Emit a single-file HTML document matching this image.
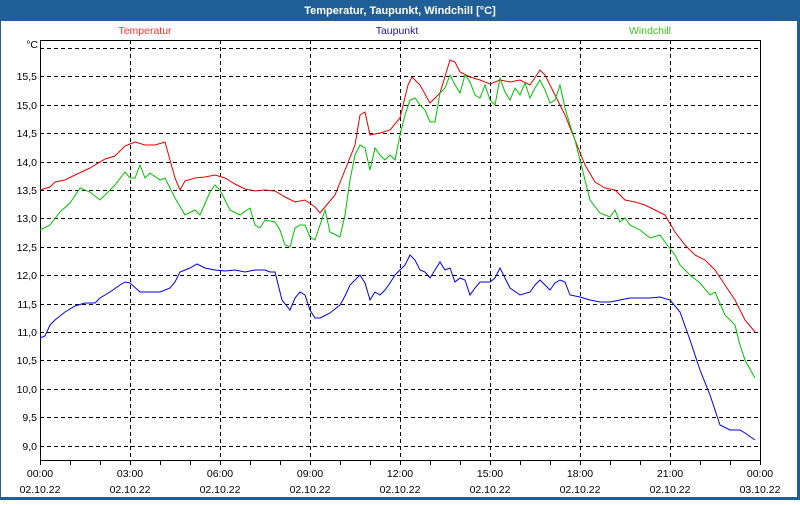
<!DOCTYPE html>
<html><head><meta charset="utf-8"><style>
body{margin:0;width:800px;height:500px;overflow:hidden;background:#fff;font-family:"Liberation Sans",sans-serif}
</style></head><body>
<svg width="800" height="500" xmlns="http://www.w3.org/2000/svg" font-family="Liberation Sans, sans-serif" font-size="10.5">
<rect x="0" y="0" width="800" height="500" fill="#1f5f96"/>
<rect x="1" y="21" width="796" height="476" fill="#fff"/>
<text x="400" y="14" fill="#fff" font-weight="bold" font-size="11" text-anchor="middle">Temperatur, Taupunkt, Windchill [°C]</text>
<text x="145" y="34" fill="#f03030" text-anchor="middle">Temperatur</text>
<text x="397" y="34" fill="#2020a0" text-anchor="middle">Taupunkt</text>
<text x="650" y="34" fill="#40c020" text-anchor="middle">Windchill</text>
<g stroke="#000" stroke-dasharray="4,3" stroke-width="1">
<path d="M40 48.5H760M40 76.5H760M40 105.5H760M40 133.5H760M40 162.5H760M40 190.5H760M40 218.5H760M40 247.5H760M40 275.5H760M40 304.5H760M40 332.5H760M40 360.5H760M40 389.5H760M40 417.5H760M40 446.5H760"/>
<path d="M130.5 40V460M220.5 40V460M310.5 40V460M400.5 40V460M490.5 40V460M580.5 40V460M670.5 40V460"/>
</g>
<rect x="40.5" y="40.5" width="720" height="420" fill="none" stroke="#000"/>
<path stroke="#000" d="M70.5 460V465M100.5 460V465M130.5 460V465M160.5 460V465M190.5 460V465M220.5 460V465M250.5 460V465M280.5 460V465M310.5 460V465M340.5 460V465M370.5 460V465M400.5 460V465M430.5 460V465M460.5 460V465M490.5 460V465M520.5 460V465M550.5 460V465M580.5 460V465M610.5 460V465M640.5 460V465M670.5 460V465M700.5 460V465M730.5 460V465M40.5 460V465M760.5 460V465"/>
<g text-anchor="end" fill="#000">
<text x="38" y="48">°C</text>
<text x="37" y="80">15,5</text><text x="37" y="109">15,0</text><text x="37" y="137">14,5</text><text x="37" y="166">14,0</text><text x="37" y="194">13,5</text><text x="37" y="222">13,0</text><text x="37" y="251">12,5</text><text x="37" y="279">12,0</text><text x="37" y="308">11,5</text><text x="37" y="336">11,0</text><text x="37" y="364">10,5</text><text x="37" y="393">10,0</text><text x="37" y="421">9,5</text><text x="37" y="450">9,0</text>
</g>
<g text-anchor="middle" fill="#000">
<text x="40" y="477">00:00</text><text x="130" y="477">03:00</text><text x="220" y="477">06:00</text><text x="310" y="477">09:00</text><text x="400" y="477">12:00</text><text x="490" y="477">15:00</text><text x="580" y="477">18:00</text><text x="670" y="477">21:00</text><text x="760" y="477">00:00</text>
<text x="40" y="493">02.10.22</text><text x="130" y="493">02.10.22</text><text x="220" y="493">02.10.22</text><text x="310" y="493">02.10.22</text><text x="400" y="493">02.10.22</text><text x="490" y="493">02.10.22</text><text x="580" y="493">02.10.22</text><text x="670" y="493">02.10.22</text><text x="760" y="493">03.10.22</text>
</g>
<g fill="none" stroke-width="1">
<polyline stroke="#e00000" points="40,190 50,187 55,182 65,180 75,175 90,168 105,159 115,156 125,146 135,142 145,145 155,145 165,142 170,160 175,178 180,190 185,181 195,178 205,177 215,175 225,178 235,184 245,189 255,191 265,190 275,191 285,197 295,202 305,200 315,207 320,213 325,207 335,195 345,170 355,145 360,115 365,112 370,135 380,133 390,130 400,118 408,85 412,77 420,85 430,103 440,93 450,60 455,62 460,72 470,77 480,80 490,84 500,80 510,82 520,80 530,85 540,70 545,75 555,95 565,115 575,140 585,165 595,182 605,188 615,190 625,200 635,202 645,205 655,210 665,215 675,232 685,245 695,255 705,260 715,270 725,285 735,300 745,320 755,332"/>
<polyline stroke="#00c000" points="40,230 50,225 60,212 70,203 80,188 90,192 100,200 105,195 115,185 125,172 130,178 135,178 140,165 145,178 150,173 160,180 165,178 175,198 185,215 195,210 200,215 210,192 215,185 220,190 230,210 240,215 250,208 255,225 260,228 265,220 275,222 280,230 285,245 290,247 295,228 300,225 305,225 310,237 315,240 320,225 325,210 330,232 340,237 345,215 350,180 355,155 360,145 365,148 370,170 375,148 380,155 385,160 390,155 395,160 400,135 405,115 410,100 415,98 420,105 425,110 430,122 435,122 440,93 445,88 450,75 455,85 460,93 465,75 470,82 475,95 480,98 485,85 490,100 495,105 500,78 505,92 510,100 515,88 520,95 525,83 530,98 535,88 540,80 545,90 550,103 555,100 560,85 565,108 570,125 575,140 580,160 585,180 590,200 600,213 610,217 615,210 620,222 625,218 630,225 640,230 650,238 660,235 665,242 675,255 680,265 690,275 700,283 710,295 715,292 725,315 735,325 740,345 745,360 755,378"/>
<polyline stroke="#0000e0" points="40,338 45,336 50,325 55,320 65,312 75,306 85,303 95,303 100,298 110,292 120,285 125,282 130,283 140,292 150,292 160,292 170,288 175,282 180,272 190,268 197,264 205,268 215,270 225,271 235,270 245,272 255,270 265,270 270,272 275,272 282,300 290,310 295,298 300,292 305,295 310,310 315,318 320,318 330,313 340,305 345,296 350,285 360,275 365,283 370,300 375,292 380,295 385,290 390,283 395,275 405,265 410,255 415,260 420,270 425,272 430,278 435,270 440,262 445,270 450,268 455,282 460,278 465,280 470,295 475,288 480,282 490,282 495,278 500,268 505,278 510,288 520,295 530,292 535,285 540,280 545,285 550,290 555,283 560,280 565,282 570,295 580,297 590,300 600,302 610,302 620,300 630,298 640,298 650,298 660,297 670,300 680,312 690,340 700,370 710,395 720,425 730,430 740,430 745,433 755,440"/>
</g>
</svg>
</body></html>
